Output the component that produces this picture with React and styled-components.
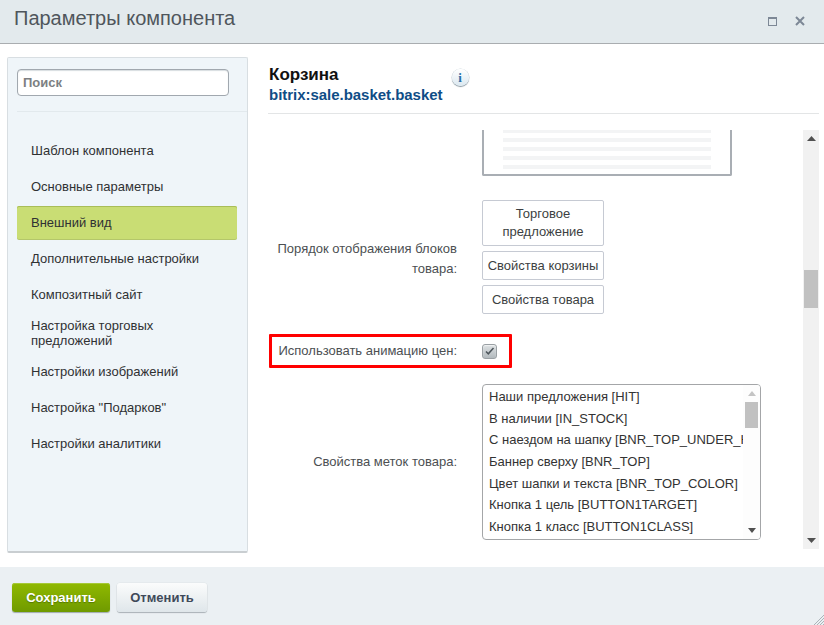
import React from "react";
import styled, { createGlobalStyle } from "styled-components";

const Global = createGlobalStyle`
  html, body { margin: 0; padding: 0; background: #fff; overflow: hidden; }
  * { box-sizing: border-box; }
  body { font-family: "Liberation Sans", Arial, sans-serif; color: #333; }
`;

const Dialog = styled.div`
  width: 824px; height: 625px; display: flex; flex-direction: column; background: #fff;
`;
const Header = styled.header`
  height: 44px; flex: none; background: #e3eaed; border-bottom: 1px solid #a9adb0;
  display: flex; align-items: center; justify-content: space-between; padding: 0 19px 1px 14px;
`;
const Title = styled.h1`
  margin: 0 0 6px; font-size: 20px; font-weight: 400; color: #4f565c; line-height: 32px;
`;
const WindowIcons = styled.div`
  display: flex; align-items: center; gap: 18px;
`;
const Body = styled.div`
  flex: 1; min-height: 0; display: flex; align-items: flex-start; padding: 13px 5px 0 7px; gap: 20px;
`;
const Sidebar = styled.aside`
  width: 241px; height: 496px; flex: none; background: #eff5f9; border: 1px solid #d8dee2;
  border-bottom: 2px solid #c9ced1; border-radius: 2px; padding: 11px 0 0 9px;
`;
const SearchBox = styled.div`
  width: 212px; height: 27px; background: #fff; border: 1px solid #a1a8af; border-radius: 4px;
  box-shadow: inset 0 1px 1px #d8dde0;
  padding-left: 5px; display: flex; align-items: center; font-size: 13px; font-weight: 700; color: #7c7f82;
`;
const SideDivider = styled.div`
  height: 1px; background: #e2e9ed; margin: 15px 0 22px;
`;
const Menu = styled.nav`
  display: flex; flex-direction: column; gap: 3px; width: 220px;
`;
const MenuItem = styled.div`
  height: ${p => (p.$tall ? 38 : 33)}px; display: flex; align-items: center; padding-left: 14px; border-radius: 2px;
  font-size: 13px; line-height: 15px; color: #2f3133;
  background: ${p => (p.$active ? "#c9dd74" : "transparent")};
  box-shadow: ${p => (p.$active ? "inset 0 1px 0 #a9bd58, 0 1px 0 #b4c66a" : "none")};
`;
const Main = styled.main`
  flex: 1; min-width: 0; display: flex; flex-direction: column;
`;
const Head = styled.div`
  height: 57px; border-bottom: 1px solid #e3e5e6; display: flex; align-items: flex-start; gap: 9px; padding: 8px 0 0 1px;
`;
const Heading = styled.div`
  display: flex; flex-direction: column;
`;
const ComponentName = styled.div`
  font-size: 17px; font-weight: 700; color: #111; line-height: 20px;
`;
const ComponentCode = styled.div`
  font-size: 15px; font-weight: 700; color: #0f4d86; line-height: 20px; letter-spacing: -.03px;
`;
const InfoIcon = styled.div`
  width: 17px; height: 17px; border-radius: 50%; margin-top: 4px;
  background: linear-gradient(#ffffff, #dbe8f0); box-shadow: 0 1px 1px #8d9aa3, 0 0 0 .5px #cdd7dd;
  display: flex; align-items: center; justify-content: center;
  font: 700 13px/1 "Liberation Serif", serif; color: #2a6fa8;
`;
const ScrollFrame = styled.div`
  height: 419px; margin-top: 16px; display: flex; overflow: hidden;
`;
const ScrollContent = styled.div`
  flex: 1; min-width: 0; display: flex; flex-direction: column; align-items: flex-start; overflow: hidden;
`;
const Track = styled.div`
  width: ${p => p.$w}px; flex: none; background: ${p => p.$bg}; display: flex; flex-direction: column; align-items: center;
`;
const ArrowZone = styled.div`
  height: ${p => p.$h}px; flex: none; display: flex; align-items: center; justify-content: center;
`;
const Thumb = styled.div`
  width: ${p => p.$w}px; height: ${p => p.$h}px; background: #c1c1c1; flex: none;
`;
const TrackGap = styled.div`
  height: ${p => p.$h}px; flex: ${p => (p.$h ? "none" : "1")};
`;
const Preview = styled.div`
  width: 250px; height: 46px; margin-left: 214px; flex: none;
  border: 2px solid #a9aeb4; border-top: 0; border-radius: 0 0 2px 2px;
  padding: 0 19px; display: flex; flex-direction: column; gap: 5px;
`;
const PreviewLine = styled.div`
  height: 4px; background: #f3f4f5; flex: none;
  &:first-child { height: 3px; }
`;
const Row = styled.div`
  display: grid; grid-template-columns: 189px 1fr; column-gap: 25px; align-items: center; width: 100%;
  margin-top: ${p => p.$top}px;
`;
const Label = styled.div`
  font-size: 13px; line-height: 20px; color: #4c4f52; text-align: right;
  padding-top: ${p => p.$shift || 0}px;
`;
const OrderList = styled.div`
  display: flex; flex-direction: column; gap: 5px; width: 122px;
`;
const OrderButton = styled.div`
  border: 1px solid #c6cad3; border-radius: 2px; padding: 4px 0; min-height: 29px; font-size: 13px; line-height: 18px;
  text-align: center; color: #3c3f42; background: #fff; white-space: nowrap;
  display: flex; align-items: center; justify-content: center;
`;
const Highlight = styled.div`
  display: grid; grid-template-columns: 185px 15px; column-gap: 25px; align-items: center;
  width: 243px; height: 34px; margin: 20px 0 0 1px; border: 3px solid #f00; border-radius: 1px;
`;
const CheckBox = styled.div`
  width: 15px; height: 15px; border: 1px solid #9aa0a4; border-radius: 3px;
  background: linear-gradient(#dde1e3, #b3babe); display: flex; align-items: center; justify-content: center;
  box-shadow: inset 0 1px 1px #f0f2f3;
`;
const ListBox = styled.div`
  width: 279px; height: 156px; border: 1px solid #a4a6a8; border-radius: 4px; display: flex; overflow: hidden; background: #fff;
`;
const Options = styled.div`
  flex: 1; min-width: 0; overflow: hidden; padding: 1px 0 0 6px;
`;
const Option = styled.div`
  height: 21.67px; line-height: 21.67px; font-size: 13px; white-space: nowrap; color: #333;
`;
const Footer = styled.footer`
  position: relative; height: 58px; flex: none; background: #ebf0f3; display: flex; align-items: flex-start;
  gap: 7px; padding: 16px 0 0 12px;
`;
const SaveButton = styled.div`
  width: 98px; height: 29px; border-radius: 3px; background: linear-gradient(#90b900, #6f9a00);
  box-shadow: 0 1px 1px #9fa9ae, inset 0 1px 0 #a6c935;
  display: flex; align-items: center; justify-content: center;
  font-size: 13px; font-weight: 700; color: #fff; text-shadow: 0 1px 1px #577a00;
`;
const CancelButton = styled.div`
  width: 90px; height: 29px; border-radius: 3px; background: linear-gradient(#fbfcfc, #dfe6ea);
  box-shadow: 0 1px 1px #a9b1b6, 0 0 0 .5px #dfe4e7;
  display: flex; align-items: center; justify-content: center;
  font-size: 13px; font-weight: 700; color: #3f4a5a;
`;
const Grip = styled.svg`
  position: absolute; right: 0; bottom: 0;
`;

const menu = [
  "Шаблон компонента",
  "Основные параметры",
  "Внешний вид",
  "Дополнительные настройки",
  "Композитный сайт",
  "Настройка торговых предложений",
  "Настройки изображений",
  'Настройка "Подарков"',
  "Настройки аналитики",
];
const options = [
  "Наши предложения [HIT]",
  "В наличии [IN_STOCK]",
  "С наездом на шапку [BNR_TOP_UNDER_HEADER]",
  "Баннер сверху [BNR_TOP]",
  "Цвет шапки и текста [BNR_TOP_COLOR]",
  "Кнопка 1 цель [BUTTON1TARGET]",
  "Кнопка 1 класс [BUTTON1CLASS]",
];

const Arrow = ({ up, w = 9, color = "#505050" }) => (
  <svg width={w} height="5" viewBox="0 0 9 5" preserveAspectRatio="none">
    <path d={up ? "M4.5 0L9 5H0z" : "M0 0h9L4.5 5z"} fill={color} />
  </svg>
);

export default function App() {
  return (
    <Dialog>
      <Global />
      <Header>
        <Title>Параметры компонента</Title>
        <WindowIcons>
          <svg width="9" height="9" viewBox="0 0 9 9">
            <rect x=".5" y=".5" width="8" height="8" fill="none" stroke="#7d8896" />
            <path d="M0 1.5h9" stroke="#7d8896" />
          </svg>
          <svg width="10" height="10" viewBox="0 0 10 10">
            <path d="M1 1l8 8M9 1l-8 8" stroke="#7d8896" strokeWidth="2" />
          </svg>
        </WindowIcons>
      </Header>
      <Body>
        <Sidebar>
          <SearchBox>Поиск</SearchBox>
          <SideDivider />
          <Menu>
            {menu.map((m, i) => (
              <MenuItem key={m} $active={i === 2} $tall={i === 5}>{m}</MenuItem>
            ))}
          </Menu>
        </Sidebar>
        <Main>
          <Head>
            <Heading>
              <ComponentName>Корзина</ComponentName>
              <ComponentCode>bitrix:sale.basket.basket</ComponentCode>
            </Heading>
            <InfoIcon>i</InfoIcon>
          </Head>
          <ScrollFrame>
            <ScrollContent>
              <Preview>
                {[0, 1, 2, 3, 4].map(i => <PreviewLine key={i} />)}
              </Preview>
              <Row $top={24}>
                <Label $shift={4}>Порядок отображения блоков товара:</Label>
                <OrderList>
                  <OrderButton>Торговое<br />предложение</OrderButton>
                  <OrderButton>Свойства корзины</OrderButton>
                  <OrderButton>Свойства товара</OrderButton>
                </OrderList>
              </Row>
              <Highlight>
                <Label>Использовать анимацию цен:</Label>
                <CheckBox>
                  <svg width="11" height="10" viewBox="0 0 11 10">
                    <path d="M2 5.5l2.3 2.3L9.5 2" fill="none" stroke="#4d555b" strokeWidth="1.5" />
                  </svg>
                </CheckBox>
              </Highlight>
              <Row $top={16}>
                <Label>Свойства меток товара:</Label>
                <ListBox>
                  <Options>
                    {options.map(o => <Option key={o}>{o}</Option>)}
                  </Options>
                  <Track $w={17} $bg="#fdfdfd">
                    <ArrowZone $h={17}><Arrow up w={8} color="#c4c4c4" /></ArrowZone>
                    <Thumb $w={13} $h={26} />
                    <TrackGap />
                    <ArrowZone $h={17}><Arrow w={8} /></ArrowZone>
                  </Track>
                </ListBox>
              </Row>
            </ScrollContent>
            <Track $w={16} $bg="#f1f1f1">
              <ArrowZone $h={17}><Arrow up /></ArrowZone>
              <TrackGap $h={123} />
              <Thumb $w={14} $h={38} />
              <TrackGap />
              <ArrowZone $h={17}><Arrow /></ArrowZone>
            </Track>
          </ScrollFrame>
        </Main>
      </Body>
      <Footer>
        <SaveButton>Сохранить</SaveButton>
        <CancelButton>Отменить</CancelButton>
        <Grip width="10" height="10" viewBox="0 0 10 10">
          <path d="M0 10L10 0M3 10l7-7M6 10l4-4M9 10l1-1" stroke="#9aa3a8" strokeWidth=".8" />
        </Grip>
      </Footer>
    </Dialog>
  );
}
